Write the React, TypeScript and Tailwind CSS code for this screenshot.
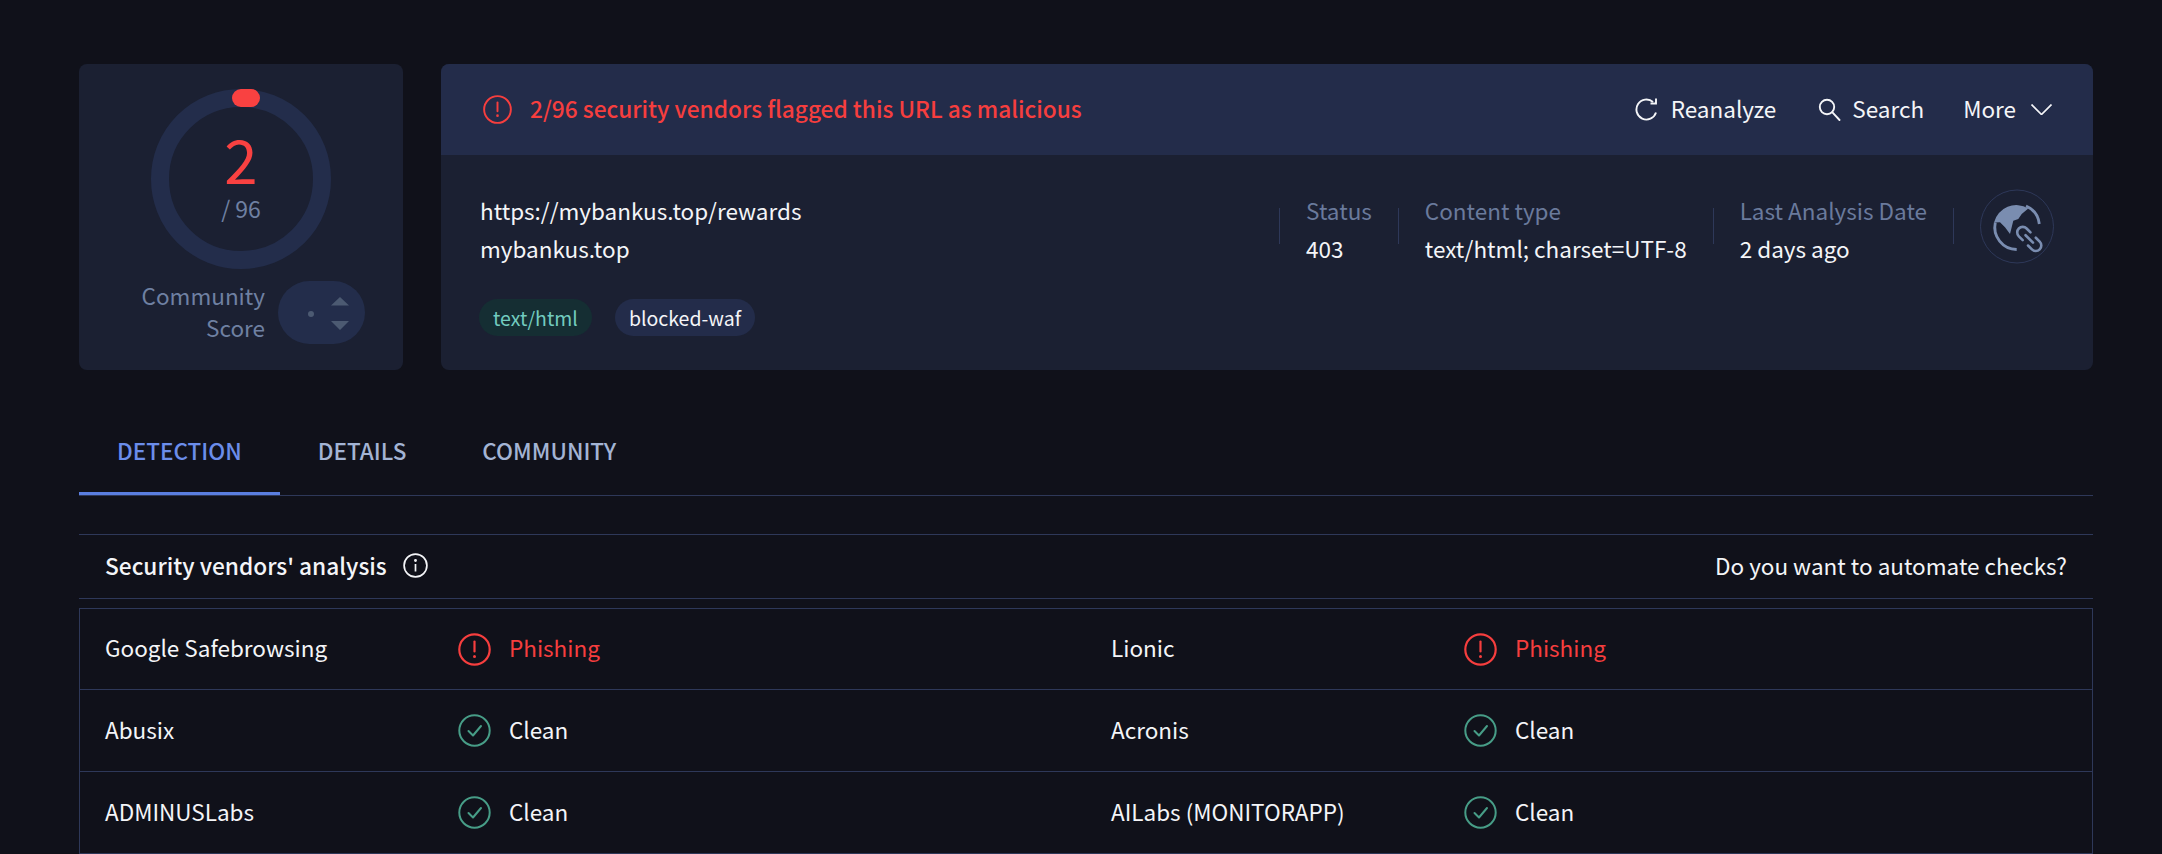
import React from 'react';

const AlertIcon = ({ className }: { className: string }) => (
  <svg viewBox="0 0 33 33" fill="none" className={className}>
    <circle cx="16.5" cy="16.5" r="15.2" stroke="currentColor" strokeWidth="2.2" />
    <path d="M16.5 8.5v10" stroke="currentColor" strokeWidth="2.2" strokeLinecap="round" />
    <circle cx="16.5" cy="23.5" r="1.5" fill="currentColor" />
  </svg>
);

const CheckIcon = () => (
  <svg viewBox="0 0 33 33" fill="none" className="w-[33px] h-[33px] text-[#479d87] shrink-0">
    <circle cx="16.5" cy="16.5" r="15.2" stroke="currentColor" strokeWidth="2" />
    <path d="M10.5 17l4.5 4.5 8-9.5" stroke="currentColor" strokeWidth="2" strokeLinecap="round" strokeLinejoin="round" />
  </svg>
);

const RefreshIcon = () => (
  <svg viewBox="0 0 23 23" fill="none" stroke="currentColor" strokeWidth="1.9" className="w-[23px] h-[23px]">
    <path d="M21 14.5a10 10 0 1 1-3-10.5" />
    <path d="M21 0.5v5h-5.5" />
  </svg>
);

const SearchIcon = () => (
  <svg viewBox="0 0 23 23" fill="none" stroke="currentColor" strokeWidth="1.9" strokeLinecap="round" className="w-[23px] h-[23px]">
    <circle cx="9" cy="9" r="7.2" />
    <path d="M14.2 14.2l7.3 7.8" />
  </svg>
);

const GlobeLinkIcon = () => (
  <svg viewBox="0 0 74 74" fill="none" className="w-[74px] h-[75px]">
    <circle cx="37" cy="37" r="36.5" stroke="#2e3859" />
    <path
      d="M14 33a23 23 0 0 1 34.3-14L41.7 24.5 38.3 29.5 33.3 31.2 31.7 37.8 30 44.5 25 37.8 20 32.8z"
      fill="#7a8db0"
    />
    <path d="M59.3 34.5A22.3 22.3 0 0 0 46 16.5" stroke="#7a8db0" strokeWidth="2.8" />
    <path d="M15.3 33A22.3 22.3 0 0 0 36.7 60" stroke="#7a8db0" strokeWidth="2.8" />
    <g transform="rotate(45 49.3 49.5)" stroke="#7a8db0" strokeWidth="2.6" strokeLinecap="round">
      <path d="M45.5 44h-5.5a5.5 5.5 0 0 0 0 11h5.5" />
      <path d="M53 44h5.5a5.5 5.5 0 0 1 0 11H53" />
      <path d="M44 49.5h10.5" />
    </g>
  </svg>
);

const Stat = ({ label, value }: { label: string; value: string }) => (
  <>
    <div className="w-px h-[36px] bg-[#2e3859]" />
    <div className="px-[26px] pt-[5px] leading-[38px] whitespace-nowrap">
      <div className="text-[#6a7a9c]">{label}</div>
      <div className="text-[#f4f5f8]">{value}</div>
    </div>
  </>
);

const rows = [
  ['Google Safebrowsing', 'Phishing', 'Lionic', 'Phishing'],
  ['Abusix', 'Clean', 'Acronis', 'Clean'],
  ['ADMINUSLabs', 'Clean', 'AILabs (MONITORAPP)', 'Clean'],
];

const Verdict = ({ vendor, result }: { vendor: string; result: string }) => (
  <div className="flex items-center pl-[25px]">
    <div className="w-[353px] pb-[2px] text-[#f4f5f8]">{vendor}</div>
    {result === 'Phishing' ? <AlertIcon className="w-[33px] h-[33px] text-[#f63e3e] shrink-0" /> : <CheckIcon />}
    <div className={result === 'Phishing' ? 'ml-[18px] pb-[2px] text-[#f63e3e]' : 'ml-[18px] pb-[2px] text-[#f4f5f8]'}>{result}</div>
  </div>
);

export default function App() {
  return (
    <div className="h-[854px] overflow-hidden bg-[#10111a] pl-[79px] pr-[69px] pt-[64px] text-[22.5px] font-['Noto_Sans_CJK_JP',sans-serif]">
      <div className="flex gap-[38px] h-[306px]">
        <div className="w-[324px] rounded-lg bg-[#1b2032] flex flex-col items-center pt-[25px]">
          <div className="relative w-[180px] h-[180px]">
            <svg viewBox="0 0 180 180" className="w-[180px] h-[180px]" fill="none">
              <circle cx="90" cy="90" r="81" stroke="#232d4b" strokeWidth="18" />
              <path d="M90 9h10" stroke="#f94141" strokeWidth="18" strokeLinecap="round" />
            </svg>
            <div className="absolute inset-0 flex flex-col items-center">
              <div className="mt-[41px] text-[60px] leading-[56px] text-[#f94141]">2</div>
              <div className="mt-[8px] text-[23px] leading-[28px] text-[#6f80a2]">/ 96</div>
            </div>
          </div>
          <div className="flex items-center w-full pl-[60px] mt-[10px]">
            <div className="w-[126px] text-right text-[22.5px] leading-[32px] pb-[3px] text-[#6f80a2]">Community Score</div>
            <div className="ml-[13px] w-[87px] h-[63px] rounded-full bg-[#232d4b] relative">
              <div className="absolute left-[30px] top-[30px] w-[6px] h-[6px] rounded-full bg-[#4c5a72]" />
              <svg viewBox="0 0 18 33" className="absolute left-[53px] top-[16px] w-[18px] h-[33px]">
                <path d="M9 0l9 8.5H0zM0 24h18l-9 9z" fill="#4c5a72" />
              </svg>
            </div>
          </div>
        </div>

        <div className="flex-1 rounded-lg bg-[#1b2032] overflow-hidden">
          <div className="h-[91px] bg-[#232c4a] flex items-center pl-[42px] pr-[41px]">
            <AlertIcon className="w-[29px] h-[29px] text-[#f63e3e] shrink-0" />
            <div className="ml-[18px] pb-[1px] font-medium text-[22.7px] text-[#f63e3e]">2/96 security vendors flagged this URL as malicious</div>
            <div className="ml-auto flex items-center text-[#f4f5f8]">
              <RefreshIcon />
              <span className="ml-[13px] pb-[1px]">Reanalyze</span>
              <span className="ml-[42px]"><SearchIcon /></span>
              <span className="ml-[11px] pb-[1px]">Search</span>
              <span className="ml-[39px] pb-[1px]">More</span>
              <svg viewBox="0 0 21 11" fill="none" stroke="currentColor" strokeWidth="1.7" className="ml-[15px] w-[21px] h-[11px]">
                <path d="M0.5 0.5l10 10 10-10" />
              </svg>
            </div>
          </div>
          <div className="flex justify-between px-[39px]">
            <div>
              <div className="pt-[36px] leading-[38px] text-[#f4f5f8]">
                <div>https://mybankus.top/rewards</div>
                <div>mybankus.top</div>
              </div>
              <div className="flex gap-[23px] mt-[32px] -ml-[1px] text-[19.5px]">
                <span className="h-[37px] px-[14px] rounded-full bg-[#152e33] text-[#72cbbf] flex items-center">text/html</span>
                <span className="h-[37px] px-[14px] rounded-full bg-[#232c4a] text-[#f4f5f8] flex items-center">blocked-waf</span>
              </div>
            </div>
            <div className="flex items-center h-[76px] mt-[33px]">
              <Stat label="Status" value="403" />
              <Stat label="Content type" value="text/html; charset=UTF-8" />
              <Stat label="Last Analysis Date" value="2 days ago" />
              <div className="w-px h-[36px] bg-[#2e3859] mr-[26px]" />
              <GlobeLinkIcon />
            </div>
          </div>
        </div>
      </div>

      <div className="mt-[42px] flex border-b border-[#2e3859] font-medium">
        <div className="h-[83px] px-[38px] pb-[3px] flex items-center text-[#6b8dea] border-b-[3px] border-[#5a7ee0] -mb-px">DETECTION</div>
        <div className="h-[83px] px-[38px] pb-[6px] flex items-center text-[#a3b4d4]">DETAILS</div>
        <div className="h-[83px] px-[38px] pb-[6px] flex items-center text-[#a3b4d4]">COMMUNITY</div>
      </div>

      <div className="mt-[38px] h-[65px] border-y border-[#2e3859] flex items-center justify-between px-[26px] text-[#f4f5f8]">
        <div className="flex items-center font-medium text-[22.7px] pb-[1px]">
          Security vendors' analysis
          <svg viewBox="0 0 25 25" fill="none" stroke="currentColor" strokeWidth="1.7" className="ml-[16px] w-[25px] h-[25px]">
            <circle cx="12.5" cy="12.5" r="11.4" />
            <path d="M12.5 11v7.5" />
            <circle cx="12.5" cy="7.5" r="0.6" fill="currentColor" />
          </svg>
        </div>
        <div className="pb-[1px]">Do you want to automate checks?</div>
      </div>

      <div className="mt-[9px] border-x border-t border-[#2e3859]">
        {rows.map((r, i) => (
          <div key={r[0]} className={i === 0 ? 'grid grid-cols-2 h-[81px] border-b border-[#2e3859]' : 'grid grid-cols-2 h-[82px] border-b border-[#2e3859]'}>
            <Verdict vendor={r[0]} result={r[1]} />
            <Verdict vendor={r[2]} result={r[3]} />
          </div>
        ))}
      </div>
    </div>
  );
}
